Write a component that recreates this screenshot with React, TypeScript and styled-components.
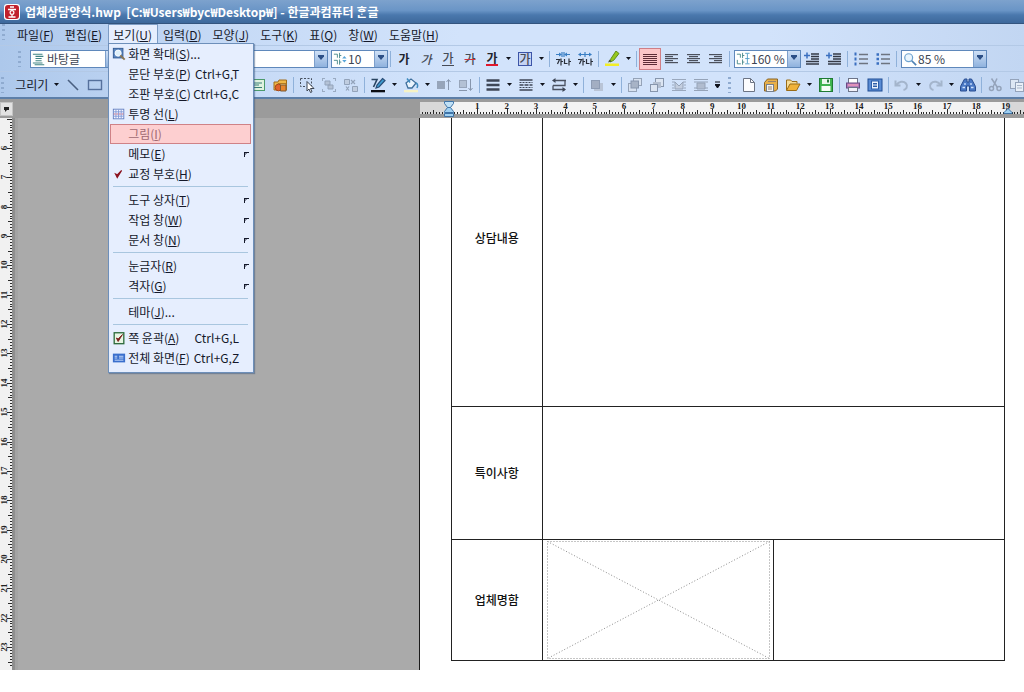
import React from "react";
import styled, { createGlobalStyle } from "styled-components";

const GlobalStyle = createGlobalStyle`
  * { box-sizing: border-box; }
  body {
    margin: 0;
    background: #fff;
    color: #14182a;
    font: 12px/16px "Noto Sans CJK KR", "Liberation Sans", sans-serif;
  }
  button, select { font: inherit; color: inherit; margin: 0; padding: 0; border: 0; background: none; }
  svg { display: block; }
`;

/* ---------- window frame ---------- */

const AppWindow = styled.div`
  overflow: hidden;
`;

const TitleBar = styled.header`
  display: flex;
  align-items: center;
  gap: 5px;
  height: 24px;
  padding-left: 4px;
  border-bottom: 1px solid #33547e;
  background: linear-gradient(#7da2cd 0%, #6a95c6 45%, #4a78ad 65%, #3d689b 100%);
`;

const Title = styled.h1`
  margin: 0;
  color: #fff;
  font-size: 12px;
  line-height: 16px;
  font-weight: 700;
  white-space: pre;
`;

const barFill = "linear-gradient(90deg, #adc8eb 0%, #c6daf6 22%, #d2e3fb 45%, #d2e3fb 75%, #c2d6f2 100%)";

const MenuBar = styled.nav`
  display: flex;
  align-items: stretch;
  height: 21px;
  padding-left: 2px;
  background: ${barFill};
`;

const ToolBar = styled.div<{ $inset: number }>`
  display: flex;
  align-items: center;
  height: 26px;
  padding-left: ${(p) => p.$inset}px;
  border-top: 1px solid #b3c9e6;
  background: ${barFill};
  white-space: nowrap;
  & > * { flex-shrink: 0; }
`;

const Grip = styled.span`
  width: 3px;
  height: 16px;
  margin-right: 7px;
  background: repeating-linear-gradient(#8fabd0 0 2px, transparent 2px 5px);
`;

/* ---------- menu ---------- */

const MenuSlot = styled.div`
  position: relative;
  display: flex;
`;

const MenuButton = styled.button<{ $open?: boolean }>`
  padding: 0 5px 0 4px;
  border: 1px solid ${(p) => (p.$open ? "#7d9cc4" : "transparent")};
  border-bottom: 0;
  background: ${(p) => (p.$open ? "#e6eefe" : "none")};
  white-space: nowrap;
`;

const Dropdown = styled.ul`
  position: absolute;
  top: 19px;
  left: 0;
  z-index: 2;
  width: 146px;
  margin: 0;
  padding: 0 2px 4px 1px;
  list-style: none;
  border: 1px solid #6d8fba;
  background: #e6eefe;
  box-shadow: 1px 1px 1px rgba(60, 90, 130, 0.5);
`;

const MenuItem = styled.button<{ $hot?: boolean }>`
  display: grid;
  grid-template-columns: 18px 1fr auto;
  align-items: center;
  width: 100%;
  height: 20px;
  padding-right: 12px;
  text-align: left;
  white-space: nowrap;
  color: ${(p) => (p.$hot ? "#a06a72" : "#14182a")};
  background: ${(p) => (p.$hot ? "#fdcfd0" : "none")};
  outline: ${(p) => (p.$hot ? "1px solid #cf8287" : "none")};
  outline-offset: -1px;
`;

const ItemIcon = styled.span`
  padding-left: 2px;
`;

const SubArrow = styled.span`
  justify-self: end;
  width: 5px;
  height: 5px;
  margin-right: -10px;
  border-top: 1px solid #14182a;
  border-left: 1px solid #14182a;
  background: linear-gradient(135deg, #8a8fa0 30%, transparent 30%);
`;

const Rule = styled.li`
  height: 2px;
  margin: 2px 3px;
  border-top: 1px solid #a9c6df;
`;

/* ---------- toolbar parts ---------- */

const IconButton = styled.button<{ $on?: boolean }>`
  display: grid;
  place-items: center;
  width: 22px;
  height: 22px;
  border: 1px solid ${(p) => (p.$on ? "#cf7f86" : "transparent")};
  background: ${(p) => (p.$on ? "#fcc6c8" : "none")};
`;

const ArrowButton = styled.button`
  display: grid;
  place-items: center;
  width: 11px;
  height: 22px;
`;

const Divider = styled.span`
  width: 1px;
  height: 16px;
  margin: 0 2px;
  background: #8fb1da;
`;

const DrawButton = styled.button`
  width: 40px;
  text-align: right;
`;

const Spacer = styled.span<{ $w: number }>`
  width: ${(p) => p.$w}px;
`;

const Letter = styled.span<{ $look: "bold" | "italic" | "under" | "strike" | "color" | "box" }>`
  color: ${(p) => (p.$look === "bold" || p.$look === "color" ? "#20242c" : "#454b56")};
  font-size: 12px;
  line-height: 14px;
  font-weight: ${(p) => (p.$look === "bold" || p.$look === "color" ? 700 : 500)};
  font-style: ${(p) => (p.$look === "italic" ? "italic" : "normal")};
  text-decoration: ${(p) => (p.$look === "strike" ? "line-through #d0303c" : "none")};
  border: 0 solid #454b56;
  ${(p) => p.$look === "under" && "border-bottom-width: 1px;"}
  ${(p) => p.$look === "color" && "border-bottom: 2px solid #e0182c; line-height: 12px;"}
  ${(p) => p.$look === "box" && "border: 1px solid #3c55a8; background: #c4d3f4; line-height: 12px;"}
`;

const Combo = styled.label<{ $w: number }>`
  display: flex;
  align-items: center;
  width: ${(p) => p.$w}px;
  height: 18px;
  margin-left: 2px;
  border: 1px solid #5f88bb;
  background: #fff;
`;

const ComboIcon = styled.span`
  padding: 0 1px;
`;

const ComboSelect = styled.select`
  appearance: none;
  flex: 1;
  min-width: 0;
  height: 16px;
  line-height: 16px;
  color: #3c4452;
`;

const ComboArrow = styled.span`
  display: grid;
  justify-items: center;
  align-items: start;
  width: 13px;
  height: 16px;
  padding-top: 4px;
  border-left: 1px solid #7d9fcb;
  background: linear-gradient(#cfe0f6, #8fb2de);
`;

/* ---------- work area ---------- */

const RulerRow = styled.div`
  display: grid;
  grid-template-columns: 41% 1fr;
  height: 21px;
  border-top: 2px solid #5d7fa8;
  background: #9b9b9b;
`;

const RulerCorner = styled.button`
  display: grid;
  place-items: center;
  width: 13px;
  height: 14px;
  margin-top: 3px;
  background: #e2e2e2;
  border: 1px solid #c4c4c4;
`;

const WorkArea = styled.main`
  display: grid;
  grid-template-columns: 41% 1fr;
  background: #aaa;
`;

const LeftPane = styled.div`
  display: flex;
  overflow: hidden;
  border-right: 1px solid #1c1c1c;
`;

const VerticalRuler = styled.div`
  position: relative;
  width: 18px;
  background: linear-gradient(90deg, #f1f1f1 0 12px, #8f8f8f 12px 15px, #a4a4a4 15px);
  & > svg { position: absolute; inset: 0; }
`;

const Page = styled.div`
  padding: 0 19px 9px 31px;
  background: #fff;
`;

const FormTable = styled.table`
  width: 100%;
  table-layout: fixed;
  border-collapse: collapse;
`;

/* The first row continues from above the visible part of the page, so it has no top line. */
const Row = styled.tr<{ $h: number; $continued?: boolean }>`
  height: ${(p) => p.$h}px;
  & > * {
    border: 1px solid #222;
    ${(p) => p.$continued && "border-top: 0;"}
  }
  & > th {
    padding: 0 0 ${(p) => (p.$continued ? 48 : 0)}px;
  }
`;

const Head = styled.th`
  font-size: 12px;
  line-height: 16px;
  font-weight: 500;
  color: #111;
`;

const Cell = styled.td`
  padding: 0 3px 0 4px;
`;

/* ---------- drawings ---------- */

const Ico = ({ children, s = 16 }: { children: React.ReactNode; s?: number }) => (
  <svg width={s} height={s} viewBox="0 0 16 16" fill="none" aria-hidden="true">
    {children}
  </svg>
);

const Down = () => (
  <svg width="5" height="3" viewBox="0 0 5 3" aria-hidden="true">
    <path d="M0 0h5L2.500 3z" fill="#10131c" />
  </svg>
);

const ComboDown = () => (
  <svg width="6" height="5" viewBox="0 0 6 5" aria-hidden="true">
    <path d="M0 0h6v1.500L3 5 0 1.500z" fill="#2c4f86" />
  </svg>
);

const bars = (rows: [number, number][], color = "#4b505c") =>
  rows.map(([x, w], i) => <rect key={i} x={x} y={3 + i * 2} width={w} height="1.200" fill={color} />);

const icons: Record<string, React.ReactNode> = {
  logo: (
    <>
      <rect width="16" height="16" rx="3" fill="#fff" />
      <rect x="1" y="1" width="14" height="14" rx="3" fill="#c0202c" />
      <path d="M6 3h4M4 5.500h8M8 13v-2M4.500 13h7" stroke="#fff" strokeWidth="1.300" />
      <circle cx="8" cy="8.500" r="1.900" stroke="#fff" strokeWidth="1.200" />
    </>
  ),
  zoomBox: (
    <>
      <rect x="1.500" y="1.500" width="11" height="11" fill="#5b86bf" stroke="#2f5790" />
      <circle cx="7" cy="7" r="3.500" fill="#dff0fb" stroke="#fff" />
      <path d="M9.500 9.500l5 5" stroke="#8a7550" strokeWidth="2.200" />
    </>
  ),
  grid: (
    <>
      <rect x="1.500" y="2.500" width="12" height="11" fill="#f7f9ff" stroke="#5e7bc0" />
      <path d="M4.500 3v10M7.500 3v10M10.500 3v10M2 5.500h11M2 10.500h11" stroke="#7d96d6" />
      <path d="M2 8h11" stroke="#c65a72" strokeDasharray="2 1" />
    </>
  ),
  check: <path d="M4 8l2 4 5-8-5 5z" fill="#8c1420" stroke="#8c1420" strokeWidth="1.300" />,
  outline: (
    <>
      <rect x="2.500" y="2" width="11" height="12.500" fill="#e8f5e4" stroke="#2c6a3c" strokeWidth="1.500" />
      <path d="M5 8l2 4 5-8-5 5z" fill="#7a1c1c" stroke="#7a1c1c" />
    </>
  ),
  full: (
    <>
      <rect x="1" y="3" width="14" height="10" fill="#3a6fcd" />
      <path d="M3 6h3M3 8h3M8 6h5M8 8h5M3 10.500h10" stroke="#d4e4ff" />
    </>
  ),
  style: (
    <path d="M1 2.500h11M4 5h9M4 7.500h7M4 10h7M1 12.500h11M3 14.500h11" stroke="#3f8484" strokeWidth="1.200" />
  ),
  size: (
    <>
      <path d="M1 2.500h4v4M7.500 1v6M7.500 4h2M1 9.500h4v4.500M7.500 8.500v6M7.500 11.500h2" stroke="#3f8484" />
      <path d="M13 4.500l2.500 3h-5zM13 12l2.500-3h-5z" fill="#57a4d8" />
    </>
  ),
  lineHeight: (
    <>
      <path d="M1 2.500h4v4M7.500 1v6M7.500 4h2M1.500 9v4.500h4M7.500 8.500v6M7.500 11.500h2" stroke="#3f8484" />
      <path d="M10.500 1.500h5M10.500 7.500h5M10.500 13.500h5M13 2v11" stroke="#4a9ac4" />
    </>
  ),
  search: (
    <>
      <circle cx="6.500" cy="6.500" r="4.500" fill="#eaf5fd" stroke="#6fa3d0" strokeWidth="1.400" />
      <path d="M10 10l5 5" stroke="#4f82b4" strokeWidth="2" />
    </>
  ),
  spaceIn: (
    <>
      <path d="M1 3.500h5M10 3.500h5M7 1v5M9 1v5" stroke="#3a7fc4" strokeWidth="1.200" />
      <path d="M4 1.500l3 2-3 2zM12 1.500l-3 2 3 2z" fill="#3a7fc4" />
      <path d="M1 8.500h3.500l-2 4.500M6 7.500v7M6 10.500h2M9.500 8v4.500h3M14 7.500v7M14 10.500h2" stroke="#2b303a" strokeWidth="1.200" />
    </>
  ),
  spaceOut: (
    <>
      <path d="M4 3.500h8M8 1v5" stroke="#3a7fc4" strokeWidth="1.200" />
      <path d="M4 1.500l-3 2 3 2zM12 1.500l3 2-3 2z" fill="#3a7fc4" />
      <path d="M1 8.500h3.500l-2 4.500M6 7.500v7M6 10.500h2M9.500 8v4.500h3M14 7.500v7M14 10.500h2" stroke="#2b303a" strokeWidth="1.200" />
    </>
  ),
  highlight: (
    <>
      <path d="M12 0l3 2.500L9.500 9.500 6 11l1-3.500z" fill="#96c81e" stroke="#5f8a1c" />
      <path d="M5.500 8.500l2 2-3.500 1z" fill="#4b5a3a" />
      <rect x="1" y="12.500" width="14" height="2.500" fill="#f2ee26" />
    </>
  ),
  justify: (
    <>
      {[3, 5, 7, 9, 11, 13].map((y) => (
        <rect key={y} x="1" y={y} width="14" height="1" fill="#5c2c36" />
      ))}
    </>
  ),
  left: <>{bars([[1, 13], [1, 8], [1, 13], [1, 8], [1, 13]])}</>,
  center: <>{bars([[1, 13], [3, 9], [1, 13], [3, 9], [1, 13]])}</>,
  right: <>{bars([[1, 13], [6, 8], [1, 13], [6, 8], [1, 13]])}</>,
  indent: (
    <>
      <path d="M0 4.500h6M3 1.500v6" stroke="#3a6fc0" strokeWidth="1.500" />
      <path d="M7 3h8M7 5.500h8M7 8h8M2 10.500h13M2 13h13" stroke="#353a46" strokeWidth="1.500" />
    </>
  ),
  numbered: (
    <>
      <path d="M2.500 1.500v13" stroke="#3a6fc0" strokeWidth="2" strokeDasharray="3 2" />
      <path d="M6 3.500h9M6 8h9M6 12.500h9" stroke="#6d7480" strokeWidth="1.500" />
    </>
  ),
  bullets: (
    <>
      <path d="M1.500 3.500H4M1.500 8H4M1.500 12.500H4" stroke="#3a6fc0" strokeWidth="2.500" />
      <path d="M6 3.500h9M6 8h9M6 12.500h9" stroke="#6d7480" strokeWidth="1.500" />
    </>
  ),
  line: <path d="M3 3l10 10" stroke="#4a6080" strokeWidth="1.600" />,
  rect: <rect x="1.500" y="3.500" width="13" height="9" stroke="#55709c" strokeWidth="1.400" />,
  textBox: (
    <>
      <rect x="1.500" y="2.500" width="13" height="11" fill="#dff2df" stroke="#4c9a6c" />
      <path d="M4 6h8M4 8h5M4 10.500h8" stroke="#3a7f78" />
    </>
  ),
  clip: (
    <>
      <path d="M2 5h4l1-2h7.500v10H2z" fill="#f0b848" stroke="#a06c1c" />
      <path d="M6 6.500h8v6H6z" fill="#f8d688" stroke="#b07a24" />
      <circle cx="6.500" cy="10.500" r="3.300" fill="#e0622c" stroke="#a84818" />
      <path d="M8.500 8h5.500v6H8.500z" fill="#e8862e" stroke="#7a5a34" />
    </>
  ),
  pick: (
    <>
      <path d="M1.500 1.500h11v8M1.500 1.500v8h5" stroke="#46505e" strokeDasharray="2 1.500" />
      <path d="M8 4.500v9.500l2-2 1.500 3.500 1.500-.7-1.500-3.300H15z" fill="#fff" stroke="#3b4350" />
    </>
  ),
  group: (
    <>
      <path d="M1 1.500h3M1.500 1v3M14.500 1v3M12 1.500h3M1 14.500h3M1.500 12v3M14.500 12v3M12 14.500h3" stroke="#9aabc2" />
      <path d="M4 4h5v4H4zM7 8h5v4H7z" fill="#b4c2d6" stroke="#93a3ba" />
    </>
  ),
  ungroup: (
    <>
      <path d="M1.500 2.500h5v5h-5zM9.500 9.500h5v5h-5z" fill="#c0cde0" stroke="#93a3ba" />
      <path d="M8 3l4 4M12 3L8 7M3 9.500l3 4M6 9.500l-3 4" stroke="#93a3ba" strokeWidth="1.200" />
    </>
  ),
  pen: (
    <>
      <path d="M1.500 2.500H7L3.500 10" stroke="#28435f" strokeWidth="1.600" />
      <path d="M12.500 1.500l2.500 2L9 10l-3 1 1-3z" fill="#3e9cd0" stroke="#2c4f78" strokeWidth="1.200" />
      <rect x="1" y="13" width="14" height="2.300" fill="#0c0e14" />
    </>
  ),
  bucket: (
    <>
      <path d="M3 6l5-4 5 4-4 5H5z" fill="#eaf4fd" stroke="#3f6f9c" strokeWidth="1.300" />
      <path d="M4 1.500l3 4M13 6c2 1 2 3 1 5" stroke="#3f8cc0" strokeWidth="1.500" />
      <rect x="1" y="13" width="14" height="2.300" fill="#f7f3c4" />
    </>
  ),
  raise: (
    <>
      <rect x="1" y="4" width="8" height="8" fill="#97a5ba" />
      <path d="M12.500 13V3M10.500 5l2-2.500 2 2.500" stroke="#8796ad" />
    </>
  ),
  lower: (
    <>
      <rect x="1.500" y="3.500" width="7" height="7" fill="#b3c1d4" stroke="#97a5ba" />
      <path d="M12.500 2v11M10.500 11l2 2.500 2-2.500M1 13.500h8" stroke="#8796ad" />
    </>
  ),
  thick: (
    <path d="M1.500 3.500h13M1.500 8h13M1.500 12.500h13" stroke="#3e4656" strokeWidth="2.400" />
  ),
  dashes: (
    <>
      <path d="M1.500 3h13M1.500 13h13" stroke="#3e4656" strokeWidth="1.500" />
      <path d="M1.500 5.500h13M1.500 10.500h13" stroke="#3e4656" strokeDasharray="2 1" />
      <path d="M1.500 8h13" stroke="#3e4656" strokeWidth="1.500" strokeDasharray="4 1" />
    </>
  ),
  arrows: (
    <>
      <path d="M3 3.500h12M2 8.500h12v-5M2 8.500v4h12" stroke="#4a5160" strokeWidth="1.300" />
      <path d="M4.500 1L1 3.500 4.500 6zM11.500 10l3.500 2.500-3.500 2.500z" fill="#3e4656" />
    </>
  ),
  shadow: (
    <>
      <rect x="5" y="6" width="9" height="8" fill="#b9c4d6" />
      <rect x="2.500" y="3.500" width="8" height="8" fill="#a3aec2" stroke="#8e9cb4" />
    </>
  ),
  front: (
    <>
      <rect x="6.500" y="1.500" width="8" height="7" fill="#d8e2f0" stroke="#95a3b8" />
      <rect x="1.500" y="6.500" width="8" height="8" fill="#d8e2f0" stroke="#95a3b8" />
      <rect x="4" y="4" width="7.500" height="7" fill="#a7b3c6" stroke="#8796ad" />
    </>
  ),
  back: (
    <>
      <rect x="6.500" y="1.500" width="8" height="8" fill="#dce5f2" stroke="#8796ad" />
      <rect x="4" y="5" width="8" height="6" fill="#b4bfd0" />
      <rect x="1.500" y="7.500" width="7" height="7" fill="#dce5f2" stroke="#8796ad" />
    </>
  ),
  wrapA: (
    <>
      <path d="M1 2.500h14M1 5h3M12 5h3M1 8h2M13 8h2M1 11h2M13 11h2M1 13.500h14" stroke="#9aa8bd" />
      <path d="M4 5l4 4 4-4v7H4z" fill="#c3cedf" stroke="#95a3b8" />
    </>
  ),
  wrapB: (
    <>
      <path d="M1 2.500h14M1 5h14M1 11h3M12 11h3M1 13.500h14" stroke="#95a3b8" />
      <path d="M4 6h8v6H4z" fill="#b0bccf" stroke="#95a3b8" />
    </>
  ),
  newDoc: (
    <>
      <path d="M2.500 1.500h7l4 4v9h-11z" fill="#fbfcfe" stroke="#6c7484" />
      <path d="M9.500 1.500v4h4" stroke="#6c7484" />
    </>
  ),
  template: (
    <>
      <path d="M1.500 5.500l3-3.500h10v10l-2 2h-11z" fill="#e8b04a" stroke="#8a6424" />
      <rect x="3.500" y="7.500" width="7" height="7" fill="#f4f4f4" stroke="#77808c" />
      <path d="M5 10h4M5 12h4M5 4.500h8" stroke="#97826a" />
    </>
  ),
  open: (
    <>
      <path d="M1.500 13V3h4l1.500 1.500h5v2" fill="#f6dc96" stroke="#9a6c18" />
      <path d="M1.500 13.500L5 7h10l-3.500 6.500z" fill="#f0b23a" stroke="#9a6c18" />
    </>
  ),
  save: (
    <>
      <rect x="1.500" y="1.500" width="13" height="13" fill="#3fb44e" stroke="#1f7a34" />
      <rect x="4" y="2" width="8" height="5" fill="#e9f8ea" />
      <rect x="3.500" y="9" width="9" height="5" fill="#f6fff6" />
      <rect x="9" y="2.500" width="2" height="3" fill="#2b7a3b" />
    </>
  ),
  print: (
    <>
      <rect x="3.500" y="1.500" width="9" height="5" fill="#fff" stroke="#6d7488" />
      <rect x="1.500" y="6" width="13" height="5" fill="#b07cb8" stroke="#6d4a84" />
      <rect x="3.500" y="10.500" width="9" height="4" fill="#f2f2fa" stroke="#6d7488" />
      <path d="M3 8h10" stroke="#f09aba" strokeWidth="1.500" />
    </>
  ),
  preview: (
    <>
      <rect x="1" y="2" width="14" height="12" fill="#5a8cd4" stroke="#1f4c94" />
      <rect x="4.500" y="4" width="7" height="8" fill="#eef5ff" stroke="#2e5ea8" />
      <path d="M6 6.500h4M6 8h4M6 9.500h4" stroke="#2e5ea8" />
    </>
  ),
  undo: (
    <path d="M1.500 3.500v5h5M2.500 8c2-3.500 7-4.500 9.500-1.500s0 6-2.500 6.500" stroke="#a4b5cc" strokeWidth="2" />
  ),
  redo: (
    <path d="M14.500 3.500v5h-5M13.500 8c-2-3.500-7-4.500-9.500-1.500s0 6 2.500 6.500" stroke="#a4b5cc" strokeWidth="2" />
  ),
  find: (
    <>
      <path d="M4.500 2h2.500v3h2v-3h2.500l4 7.500v4.500H9.500V9h-3v5h-6V9.500z" fill="#4a78c4" stroke="#284c90" />
      <path d="M2.500 10.500H5M11 10.500h2.500M5 6v2M11 6v2" stroke="#cfe2ff" strokeWidth="1.300" />
    </>
  ),
  cut: (
    <>
      <path d="M4.500 1.500l6 9M10 1.500L6 10" stroke="#94a3ba" strokeWidth="1.500" />
      <circle cx="4.500" cy="11.500" r="2" stroke="#94a3ba" strokeWidth="1.500" />
      <circle cx="12" cy="11.500" r="2" stroke="#94a3ba" strokeWidth="1.500" />
    </>
  ),
  copy: (
    <>
      <rect x="1.500" y="2.500" width="8" height="9" fill="#dde7f4" stroke="#94a3ba" />
      <rect x="6.500" y="5.500" width="8" height="9" fill="#e8eff8" stroke="#94a3ba" />
      <path d="M8 8.500h5M8 11h5" stroke="#a9b6c9" />
    </>
  ),
};

const Tool = ({ name, icon, on }: { name: string; icon: string; on?: boolean }) => (
  <IconButton type="button" aria-label={name} $on={on}>
    <Ico>{icons[icon]}</Ico>
  </IconButton>
);

const More = ({ name }: { name: string }) => (
  <ArrowButton type="button" aria-label={name}>
    <Down />
  </ArrowButton>
);

const Field = ({ name, icon, value, w }: { name: string; icon?: string; value: string; w: number }) => (
  <Combo $w={w}>
    {icon && (
      <ComboIcon>
        <Ico s={14}>{icons[icon]}</Ico>
      </ComboIcon>
    )}
    <ComboSelect aria-label={name}>
      <option>{value}</option>
    </ComboSelect>
    <ComboArrow aria-hidden="true">
      <ComboDown />
    </ComboArrow>
  </Combo>
);

const Mnemonic = ({ text, letter, tail = "" }: { text: string; letter: string; tail?: string }) => (
  <span>
    {text}(<u>{letter}</u>){tail}
  </span>
);

/* ---------- rulers ---------- */

const CM = 29.35;

const HorizontalRuler = () => {
  const origin = 28;
  const ticks = [];
  for (let i = -9; i <= 200; i++) {
    const x = Math.round(origin + (i * CM) / 10);
    const len = i % 10 === 0 ? 5 : i % 5 === 0 ? 4 : 2;
    ticks.push(<rect key={i} x={x} y={15 - len} width="1" height={len} fill="#2a2a2a" />);
  }
  return (
    <svg width="100%" height="19" aria-hidden="true">
      <rect y="3" width="100%" height="12" fill="#d8d8d8" />
      <rect x="28" y="3" width={CM * 19} height="12" fill="#f3f3f3" />
      {ticks}
      {Array.from({ length: 19 }, (_, i) => (
        <text
          key={i}
          x={origin + (i + 1) * CM}
          y="10"
          textAnchor="middle"
          fontFamily="Liberation Serif, serif"
          fontSize="9"
          fontWeight="700"
          fill="#222"
        >
          {i + 1}
        </text>
      ))}
      <path d="M24.500 2.500h9v2l-3 4h-3l-3-4z" fill="#bfe0f6" stroke="#3f74a8" />
      <path d="M27.500 8.500h3l3 4v1h-9v-1zM24.500 14.500h9v3h-9z" fill="#9fd0f2" stroke="#3f74a8" />
      <path d="M588 9.500l4 4v1h-8v-1z" fill="#9fd0f2" stroke="#3f74a8" />
    </svg>
  );
};

const SideRuler = () => {
  const first = 30;
  const ticks = [];
  for (let i = -10; i <= 176; i++) {
    const y = Math.round(first + (i * CM) / 10);
    const len = i % 10 === 0 ? 5 : i % 5 === 0 ? 4 : 2;
    ticks.push(<rect key={i} x={12 - len} y={y} width={len} height="1" fill="#2a2a2a" />);
  }
  return (
    <VerticalRuler>
      <svg width="12" height="100%" aria-hidden="true">
        {ticks}
        {Array.from({ length: 18 }, (_, i) => (
          <text
            key={i}
            transform={`translate(7 ${Math.round(first + i * CM)}) rotate(-90)`}
            textAnchor="middle"
            fontFamily="Liberation Serif, serif"
            fontSize="9"
            fontWeight="700"
            fill="#222"
          >
            {i + 6}
          </text>
        ))}
      </svg>
    </VerticalRuler>
  );
};

/* ---------- menu content ---------- */

type Entry =
  | { rule: true }
  | { text: string; letter: string; tail?: string; icon?: string; keys?: string; sub?: boolean; hot?: boolean };

const viewMenu: Entry[] = [
  { text: "화면 확대", letter: "S", tail: "...", icon: "zoomBox" },
  { text: "문단 부호", letter: "P", keys: "Ctrl+G,T" },
  { text: "조판 부호", letter: "C", keys: "Ctrl+G,C" },
  { text: "투명 선", letter: "L", icon: "grid" },
  { text: "그림", letter: "I", hot: true },
  { text: "메모", letter: "E", sub: true },
  { text: "교정 부호", letter: "H", icon: "check" },
  { rule: true },
  { text: "도구 상자", letter: "T", sub: true },
  { text: "작업 창", letter: "W", sub: true },
  { text: "문서 창", letter: "N", sub: true },
  { rule: true },
  { text: "눈금자", letter: "R", sub: true },
  { text: "격자", letter: "G", sub: true },
  { rule: true },
  { text: "테마", letter: "J", tail: "..." },
  { rule: true },
  { text: "쪽 윤곽", letter: "A", icon: "outline", keys: "Ctrl+G,L" },
  { text: "전체 화면", letter: "F", icon: "full", keys: "Ctrl+G,Z" },
];

const menus = [
  ["파일", "F"],
  ["편집", "E"],
  ["보기", "U"],
  ["입력", "D"],
  ["모양", "J"],
  ["도구", "K"],
  ["표", "Q"],
  ["창", "W"],
  ["도움말", "H"],
];

const ViewDropdown = () => (
  <Dropdown>
    {viewMenu.map((e, i) =>
      "rule" in e ? (
        <Rule key={i} role="separator" />
      ) : (
        <li key={i}>
          <MenuItem type="button" $hot={e.hot}>
            <ItemIcon>{e.icon && <Ico s={14}>{icons[e.icon]}</Ico>}</ItemIcon>
            <Mnemonic text={e.text} letter={e.letter} tail={e.tail} />
            {e.keys && <span>{e.keys}</span>}
            {e.sub && <SubArrow aria-hidden="true" />}
          </MenuItem>
        </li>
      ),
    )}
  </Dropdown>
);

export default function App() {
  return (
    <AppWindow>
      <GlobalStyle />
      <TitleBar>
        <Ico>{icons.logo}</Ico>
        <Title>업체상담양식.hwp  [C:₩Users₩byc₩Desktop₩] - 한글과컴퓨터 ᄒᆞᆫ글</Title>
      </TitleBar>

      <MenuBar>
        <Grip />
        {menus.map(([text, letter]) => (
          <MenuSlot key={letter + text}>
            <MenuButton type="button" $open={letter === "U"}>
              <Mnemonic text={text} letter={letter} />
            </MenuButton>
            {letter === "U" && <ViewDropdown />}
          </MenuSlot>
        ))}
      </MenuBar>

      <ToolBar $inset={18}>
        <Grip />
        <Field name="스타일" icon="style" value="바탕글" w={89} />
        <Spacer $w={2} />
        <Field name="글꼴" value="바탕" w={205} />
        <Spacer $w={1} />
        <Field name="글자 크기" icon="size" value="10" w={57} />
        <Divider />
        <IconButton type="button"><Letter $look="bold">가</Letter></IconButton>
        <IconButton type="button"><Letter $look="italic">가</Letter></IconButton>
        <IconButton type="button"><Letter $look="under">가</Letter></IconButton>
        <IconButton type="button"><Letter $look="strike">가</Letter></IconButton>
        <IconButton type="button"><Letter $look="color">가</Letter></IconButton>
        <More name="글자 색 선택" />
        <IconButton type="button"><Letter $look="box">가</Letter></IconButton>
        <More name="글자 테두리 선택" />
        <Divider />
        <Tool name="자간 좁게" icon="spaceIn" />
        <Tool name="자간 넓게" icon="spaceOut" />
        <Divider />
        <Tool name="형광펜" icon="highlight" />
        <More name="형광펜 색" />
        <Divider />
        <Tool name="양쪽 정렬" icon="justify" on />
        <Tool name="왼쪽 정렬" icon="left" />
        <Tool name="가운데 정렬" icon="center" />
        <Tool name="오른쪽 정렬" icon="right" />
        <Divider />
        <Field name="줄 간격" icon="lineHeight" value="160 %" w={67} />
        <Tool name="왼쪽 여백 줄이기" icon="indent" />
        <Tool name="왼쪽 여백 늘리기" icon="indent" />
        <Divider />
        <Tool name="문단 번호" icon="numbered" />
        <Tool name="글머리표" icon="bullets" />
        <Divider />
        <Field name="화면 배율" icon="search" value="85 %" w={86} />
      </ToolBar>

      <ToolBar $inset={1}>
        <Grip />
        <DrawButton type="button">그리기&nbsp;</DrawButton>
        <More name="그리기 메뉴" />
        <Tool name="직선" icon="line" />
        <Tool name="직사각형" icon="rect" />
        <Spacer $w={141} />
        <Tool name="글상자" icon="textBox" />
        <Tool name="그리기 조각" icon="clip" />
        <Divider />
        <Tool name="개체 선택" icon="pick" />
        <Tool name="개체 묶기" icon="group" />
        <Tool name="개체 풀기" icon="ungroup" />
        <Divider />
        <Tool name="선 색" icon="pen" />
        <More name="선 색 선택" />
        <Tool name="채우기 색" icon="bucket" />
        <More name="채우기 색 선택" />
        <Tool name="앞으로" icon="raise" />
        <Tool name="뒤로" icon="lower" />
        <Divider />
        <Tool name="선 굵기" icon="thick" />
        <More name="선 굵기 선택" />
        <Tool name="선 종류" icon="dashes" />
        <More name="선 종류 선택" />
        <Tool name="화살표" icon="arrows" />
        <More name="화살표 선택" />
        <Divider />
        <Tool name="그림자" icon="shadow" />
        <More name="그림자 선택" />
        <Divider />
        <Tool name="맨 앞으로" icon="front" />
        <Tool name="맨 뒤로" icon="back" />
        <Tool name="글 앞으로" icon="wrapA" />
        <Tool name="글 뒤로" icon="wrapB" />
        <ArrowButton type="button" aria-label="도구 더 보기">
          <svg width="5" height="7" viewBox="0 0 5 7" aria-hidden="true">
            <path d="M0 1h5M0 3.500h5L2.500 7z" stroke="#10131c" fill="#10131c" />
          </svg>
        </ArrowButton>
        <Spacer $w={5} />
        <Grip />
        <Tool name="새 문서" icon="newDoc" />
        <Tool name="문서마당" icon="template" />
        <Tool name="불러오기" icon="open" />
        <More name="최근 문서" />
        <Tool name="저장하기" icon="save" />
        <Divider />
        <Tool name="인쇄" icon="print" />
        <Tool name="미리 보기" icon="preview" />
        <Divider />
        <Tool name="되돌리기" icon="undo" />
        <More name="되돌리기 목록" />
        <Tool name="다시 실행" icon="redo" />
        <More name="다시 실행 목록" />
        <Tool name="찾기" icon="find" />
        <Divider />
        <Tool name="오려 두기" icon="cut" />
        <Tool name="복사하기" icon="copy" />
      </ToolBar>

      <RulerRow>
        <RulerCorner type="button" aria-label="탭 종류">
          <svg width="5" height="5" viewBox="0 0 5 5" aria-hidden="true">
            <path d="M0 0h5v3H3L1 5V3H0z" fill="#222" />
          </svg>
        </RulerCorner>
        <HorizontalRuler />
      </RulerRow>

      <WorkArea>
        <LeftPane>
          <SideRuler />
        </LeftPane>
        <Page>
          <FormTable>
            <colgroup>
              <col width="91" />
              <col width="231" />
              <col />
            </colgroup>
            <tbody>
              <Row $h={288} $continued>
                <Head scope="row">상담내용</Head>
                <Cell colSpan={2} />
              </Row>
              <Row $h={133}>
                <Head scope="row">특이사항</Head>
                <Cell colSpan={2} />
              </Row>
              <Row $h={121}>
                <Head scope="row">업체명함</Head>
                <Cell>
                  <svg width="100%" height="118" viewBox="0 0 223 118" preserveAspectRatio="none" aria-hidden="true">
                    <path
                      d="M.5 .5h222v117H.5zM.5 .5l222 117M222.500 .5L.5 117.500"
                      fill="none"
                      stroke="#8c8c8c"
                      strokeDasharray="1 2"
                    />
                  </svg>
                </Cell>
                <Cell />
              </Row>
            </tbody>
          </FormTable>
        </Page>
      </WorkArea>
    </AppWindow>
  );
}
